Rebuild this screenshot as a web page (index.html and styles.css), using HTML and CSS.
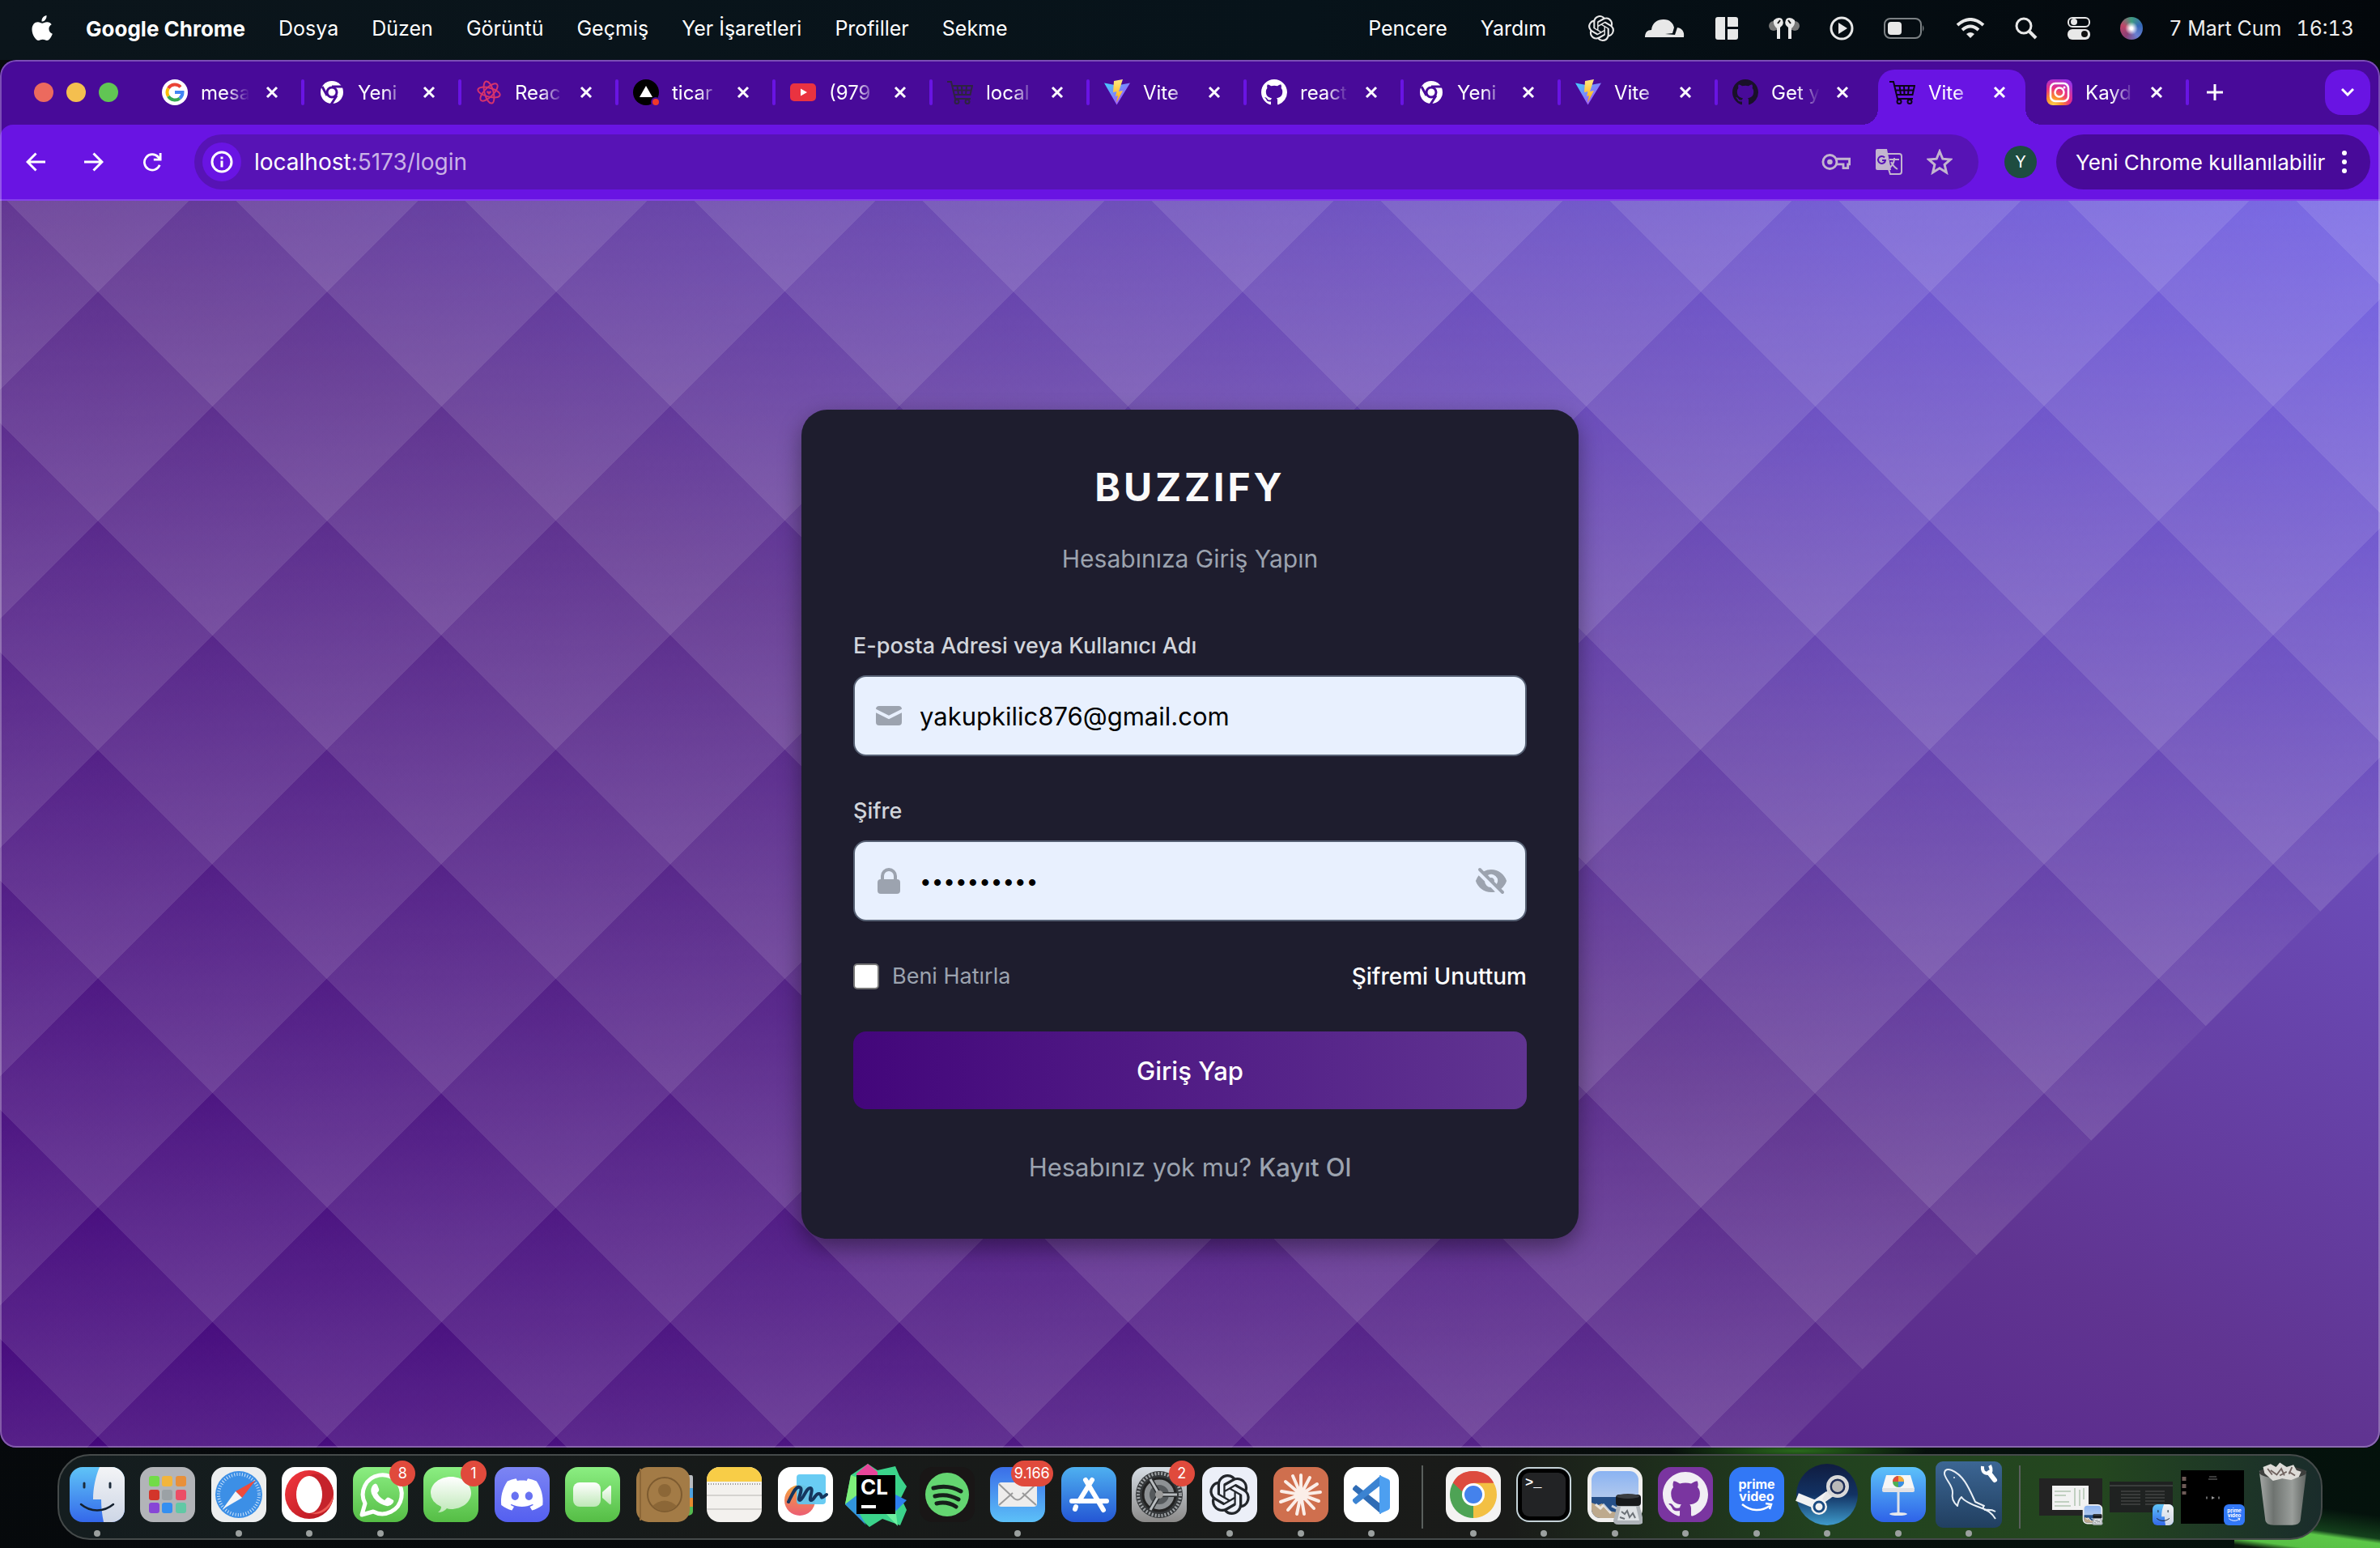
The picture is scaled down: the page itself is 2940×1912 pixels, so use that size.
FILE: index.html
```html
<!DOCTYPE html>
<html lang="tr">
<head>
<meta charset="utf-8">
<title>Buzzify</title>
<link rel="stylesheet" href="styles.css">
</head>
<body>
<svg class="defs" aria-hidden="true">
  <defs>
    <linearGradient id="viteBody" x1="0" y1="0" x2="1" y2="1"><stop offset="0" stop-color="#41d1ff"/><stop offset="1" stop-color="#bd34fe"/></linearGradient>
    <linearGradient id="viteBolt" x1="0" y1="0" x2="0" y2="1"><stop offset="0" stop-color="#ffea83"/><stop offset="1" stop-color="#ffa800"/></linearGradient>
    <linearGradient id="gloss" x1="0" y1="0" x2="0" y2="1"><stop offset="0" stop-color="#fff"/><stop offset="1" stop-color="#bfe8b8"/></linearGradient>
    <symbol id="close" viewBox="0 0 16 16"><path d="M2 2l12 12M14 2L2 14" stroke="#fff" stroke-width="3" fill="none"/></symbol>
    <symbol id="github" viewBox="0 0 16 16"><path d="M8 0C3.58 0 0 3.58 0 8c0 3.54 2.29 6.53 5.47 7.59.4.07.55-.17.55-.38 0-.19-.01-.82-.01-1.49-2.01.37-2.53-.49-2.69-.94-.09-.23-.48-.94-.82-1.13-.28-.15-.68-.52-.01-.53.63-.01 1.08.58 1.23.82.72 1.21 1.87.87 2.33.66.07-.52.28-.87.51-1.07-1.78-.2-3.64-.89-3.64-3.95 0-.87.31-1.59.82-2.15-.08-.2-.36-1.02.08-2.12 0 0 .67-.21 2.2.82.64-.18 1.32-.27 2-.27s1.36.09 2 .27c1.53-1.04 2.2-.82 2.2-.82.44 1.1.16 1.92.08 2.12.51.56.82 1.27.82 2.15 0 3.07-1.87 3.75-3.65 3.95.29.25.54.73.54 1.48 0 1.07-.01 1.93-.01 2.2 0 .21.15.46.55.38A8.01 8.01 0 0016 8c0-4.42-3.58-8-8-8z"/></symbol>
    <symbol id="openai" viewBox="0 0 24 24"><path d="M22.2819 9.8211a5.9847 5.9847 0 0 0-.5157-4.9108 6.0462 6.0462 0 0 0-6.5098-2.9A6.0651 6.0651 0 0 0 4.9807 4.1818a5.9847 5.9847 0 0 0-3.9977 2.9 6.0462 6.0462 0 0 0 .7427 7.0966 5.98 5.98 0 0 0 .511 4.9107 6.051 6.051 0 0 0 6.5146 2.9001A5.9847 5.9847 0 0 0 13.2599 24a6.0557 6.0557 0 0 0 5.7718-4.2058 5.9894 5.9894 0 0 0 3.9977-2.9001 6.0557 6.0557 0 0 0-.7475-7.0729zm-9.022 12.6081a4.4755 4.4755 0 0 1-2.8764-1.0408l.1419-.0804 4.7783-2.7582a.7948.7948 0 0 0 .3927-.6813v-6.7369l2.02 1.1686a.071.071 0 0 1 .038.052v5.5826a4.504 4.504 0 0 1-4.4945 4.4944zm-9.6607-4.1254a4.4708 4.4708 0 0 1-.5346-3.0137l.142.0852 4.783 2.7582a.7712.7712 0 0 0 .7806 0l5.8428-3.3685v2.3324a.0804.0804 0 0 1-.0332.0615L9.74 19.9502a4.4992 4.4992 0 0 1-6.1408-1.6464zM2.3408 7.8956a4.485 4.485 0 0 1 2.3655-1.9728V11.6a.7664.7664 0 0 0 .3879.6765l5.8144 3.3543-2.0201 1.1685a.0757.0757 0 0 1-.071 0l-4.8303-2.7865A4.504 4.504 0 0 1 2.3408 7.872zm16.5963 3.8558L13.1038 8.364 15.1192 7.2a.0757.0757 0 0 1 .071 0l4.8303 2.7913a4.4944 4.4944 0 0 1-.6765 8.1042v-5.6772a.79.79 0 0 0-.407-.667zm2.0107-3.0231l-.142-.0852-4.7735-2.7818a.7759.7759 0 0 0-.7854 0L9.409 9.2297V6.8974a.0662.0662 0 0 1 .0284-.0615l4.8303-2.7866a4.4992 4.4992 0 0 1 6.6802 4.66zM8.3065 12.863l-2.02-1.1638a.0804.0804 0 0 1-.038-.0567V6.0742a4.4992 4.4992 0 0 1 7.3757-3.4537l-.142.0805L8.704 5.459a.7948.7948 0 0 0-.3927.6813zm1.0976-2.3654l2.602-1.4998 2.6069 1.4998v2.9994l-2.5974 1.4997-2.6067-1.4997Z"/></symbol>
    <symbol id="chromium" viewBox="0 0 32 32"><circle cx="16" cy="16" r="14" fill="#fff"/><circle cx="16" cy="16" r="6" fill="#fff" stroke="#480a99" stroke-width="3"/><path d="M16 9h13M10 20L4 9M22 20l-7 11" stroke="#480a99" stroke-width="3" fill="none"/></symbol>
    <symbol id="vite" viewBox="0 0 32 32"><path d="M0 4.500l15.500 27L32 4.500 16 7.500z" fill="url(#viteBody)"/><path d="M23 0L12 2l-1 14 4.500-1-1.500 6 3-1-2 9 8-15-5 1z" fill="url(#viteBolt)"/></symbol>
    <symbol id="cart" viewBox="0 0 32 32"><path d="M0 3h5l5 21h19M6.500 8H31l-2.500 11H9M12.500 8l1.500 11M18 8l.5 11M24 8l-1 11M7 13.500h23" fill="none" stroke="currentColor" stroke-width="2"/><circle cx="12" cy="27.500" r="2.500" fill="none" stroke="currentColor" stroke-width="2"/><circle cx="25" cy="27.500" r="2.500" fill="none" stroke="currentColor" stroke-width="2"/></symbol>
    <symbol id="finder" viewBox="0 0 68 68">
      <linearGradient id="fl" x1="0" y1="0" x2="0" y2="1"><stop offset="0" stop-color="#5fc4f7"/><stop offset="1" stop-color="#3468ea"/></linearGradient>
      <linearGradient id="fr" x1="0" y1="0" x2="0" y2="1"><stop offset="0" stop-color="#f3f4f6"/><stop offset="1" stop-color="#cdd6e6"/></linearGradient>
      <rect width="68" height="68" rx="16" fill="url(#fl)"/><path d="M37 0h15a16 16 0 0116 16v36a16 16 0 01-16 16H42c-2-9-3-19-3-28H29C29 26 32 12 37 0z" fill="url(#fr)"/><path d="M18 20v5M50 20v5" stroke="#1c2b3a" stroke-width="3" stroke-linecap="round"/><path d="M14 46c12 10 28 10 40 0" fill="none" stroke="#14202e" stroke-width="2.500" stroke-linecap="round"/>
    </symbol>
    <symbol id="primevideo" viewBox="0 0 68 68"><rect width="68" height="68" rx="16" fill="#3278f6"/><text x="34" y="27" text-anchor="middle" class="prime-text">prime</text><text x="34" y="42" text-anchor="middle" class="prime-text">video</text><path d="M16 46c11 9 24 9 34 2M45 45l7 1-2 6" fill="none" stroke="#fff" stroke-width="2.500"/></symbol>
    <symbol id="preview" viewBox="0 0 68 72">
      <linearGradient id="sky" x1="0" y1="0" x2="0" y2="1"><stop offset="0" stop-color="#8ab3f2"/><stop offset="1" stop-color="#cfd9ea"/></linearGradient>
      <rect width="68" height="68" rx="16" fill="#f1f0ef"/><rect x="5" y="5" width="58" height="58" rx="11" fill="url(#sky)"/><path d="M5 37h58v15a11 11 0 01-11 11H16A11 11 0 015 52z" fill="#254f88"/><path d="M5 44l8 3 5-2 8 9 10 2 6 7H16A11 11 0 015 52z" fill="#bda98d"/><path d="M10 46l6 5 4-4 9 10M30 48l8 4" stroke="#fff" stroke-width="3" fill="none" opacity=".7"/>
      <path d="M37 46h27l5 20q0 5-6 5H38q-6 0-6-5z" fill="#aeb3b8"/><path d="M41 49h19l4 17H37z" fill="#dfe2e5"/><path d="M42 55l4 3 3-4 3 8 4-5 3 6M40 62l6 2" stroke="#6d7277" stroke-width="2" fill="none"/><rect x="35" y="34" width="31" height="14" rx="4" fill="#17191b"/><ellipse cx="50" cy="36" rx="14" ry="3" fill="#3a3d40"/>
    </symbol>
  </defs>
</svg>

<header class="menubar">
  <nav class="menus">
    <button aria-label="Apple"><svg width="26" height="32" viewBox="0 0 26 32" fill="#fff"><path d="M18.500 0c.3 2.800-.8 4.600-2 5.900-1.200 1.200-2.700 1.800-4 1.700-.2-2.400.8-4.200 2-5.500C15.600 1 17.200.2 18.500 0zM24.700 11.200c-2.200 1.300-3.400 3.200-3.300 5.500.1 2.800 1.700 4.900 4.400 6-1 3-3.700 8.200-6.900 8.300-1.900 0-2.700-1.200-5.100-1.200-2.500 0-3.300 1.200-5.200 1.200C5 31 .500 23.500.500 17.500.500 11.500 4 8.300 7.700 8.300c2.300 0 4 1.500 5.500 1.500 1.400 0 3.400-1.700 6.100-1.600 2.300.1 4.200 1.100 5.400 3z"/></svg></button>
    <button class="bold">Google Chrome</button><button>Dosya</button><button>Düzen</button><button>Görüntü</button><button>Geçmiş</button><button>Yer İşaretleri</button><button>Profiller</button><button>Sekme</button>
  </nav>
  <nav class="menus menus-right"><button>Pencere</button><button>Yardım</button></nav>
  <div class="status">
    <svg width="32" height="32" fill="#e8e8e8"><use href="#openai"/></svg>
    <svg width="50" height="24" viewBox="0 0 50 24" fill="#e8e8e8"><path d="M1 23C1 17 4 14 9 14 10 5 16 1 24 1c8 0 12 5 13 10l-2 7-9 1 12 1 3-9c6 1 9 5 8 12z"/></svg>
    <svg width="30" height="30" viewBox="0 0 30 30" fill="#e8e8e8"><path d="M4 1h9v28H4q-3 0-3-3V4q0-3 3-3zM16 1h10q3 0 3 3v9H16zM16 16h13v10q0 3-3 3H16z"/></svg>
    <svg width="38" height="28" viewBox="0 0 38 28" fill="#e8e8e8"><circle cx="6" cy="11" r="6" fill="#777"/><circle cx="32" cy="11" r="6" fill="#777"/><path d="M6 4q5-5 10-2 3 4 1 8l-3 3v14h-4V14Q5 10 6 4zM32 4q-5-5-10-2-3 4-1 8l3 3v14h4V14q5-4 4-10z"/><path d="M14 4l-3 4M24 4l3 4" stroke="#111" stroke-width="2"/></svg>
    <svg width="30" height="30" viewBox="0 0 30 30"><circle cx="15" cy="15" r="13" fill="none" stroke="#e8e8e8" stroke-width="3"/><path d="M11 8l11 7-11 7z" fill="#e8e8e8"/></svg>
    <svg width="52" height="26" viewBox="0 0 52 26"><rect x="1" y="1" width="45" height="24" rx="7" fill="none" stroke="#7c8184" stroke-width="2"/><rect x="5" y="5" width="17" height="16" rx="4" fill="#e8e8e8"/><path d="M48 9q3 4 0 8z" fill="#7c8184"/></svg>
    <svg width="36" height="26" viewBox="0 0 36 26" fill="none" stroke="#e8e8e8" stroke-width="4"><path d="M2 9q16-14 32 0M8 15q10-9 20 0"/><path d="M13 20q5-4 10 0l-5 5z" fill="#e8e8e8" stroke="none"/></svg>
    <svg width="28" height="28" viewBox="0 0 28 28" fill="none" stroke="#e8e8e8" stroke-width="3"><circle cx="11" cy="11" r="9"/><path d="M18 18l8 8" stroke-width="4"/></svg>
    <svg width="28" height="28" viewBox="0 0 28 28"><rect x="1" y="1" width="26" height="11" rx="5" fill="none" stroke="#e8e8e8" stroke-width="2"/><circle cx="8" cy="6" r="4" fill="#e8e8e8"/><rect y="15" width="28" height="13" rx="6" fill="#e8e8e8"/><circle cx="21" cy="21" r="4" fill="#111"/></svg>
    <span class="siri"></span>
  </div>
  <div class="clock"><span>7 Mart Cum</span><span>16:13</span></div>
</header>

<section class="window">
  <div class="tabstrip">
    <div class="lights"><i class="red"></i><i class="yellow"></i><i class="green"></i></div>
    <div class="tabs">
      <div class="tab"><svg width="32" height="32" viewBox="0 0 32 32"><circle cx="16" cy="16" r="16" fill="#fff"/><g fill="none" stroke-width="4"><path d="M23 9.500A9.500 9.500 0 008 11" stroke="#ea4335"/><path d="M8 11a9.500 9.500 0 000 10" stroke="#fbbc05"/><path d="M8 21a9.500 9.500 0 0014 2.500" stroke="#34a853"/><path d="M16 16h9.500a9.500 9.500 0 01-3.500 7.500" stroke="#4285f4"/></g></svg><span class="title">mesa</span><button class="x" aria-label="Kapat"><svg width="16" height="16"><use href="#close"/></svg></button></div>
      <div class="tab"><svg width="32" height="32"><use href="#chromium"/></svg><span class="title">Yeni</span><button class="x" aria-label="Kapat"><svg width="16" height="16"><use href="#close"/></svg></button></div>
      <div class="tab"><svg width="32" height="32" viewBox="0 0 32 32" fill="none" stroke="#d6336c" stroke-width="2"><ellipse cx="16" cy="16" rx="14" ry="5.500" transform="rotate(15 16 16)"/><ellipse cx="16" cy="16" rx="14" ry="5.500" transform="rotate(75 16 16)"/><ellipse cx="16" cy="16" rx="14" ry="5.500" transform="rotate(135 16 16)"/><path d="M16 19l-3-3q0-3 3-1 3-2 3 1z" fill="#d6336c" stroke="none"/></svg><span class="title">Reac</span><button class="x" aria-label="Kapat"><svg width="16" height="16"><use href="#close"/></svg></button></div>
      <div class="tab"><svg width="32" height="32" viewBox="0 0 32 32"><circle cx="16" cy="16" r="16"/><path d="M16 8l8 14H8z" fill="#fff"/><circle cx="28" cy="28" r="6" fill="#480a99"/><circle cx="28" cy="28" r="4" fill="#f0392b"/></svg><span class="title">ticar</span><button class="x" aria-label="Kapat"><svg width="16" height="16"><use href="#close"/></svg></button></div>
      <div class="tab"><svg width="32" height="32" viewBox="0 0 32 32"><rect y="5" width="32" height="22" rx="5" fill="#ea3340"/><path d="M13 11.500l8 4.500-8 4.500z" fill="#fff"/></svg><span class="title">(979</span><button class="x" aria-label="Kapat"><svg width="16" height="16"><use href="#close"/></svg></button></div>
      <div class="tab"><svg class="dim" width="32" height="32"><use href="#cart"/></svg><span class="title">local</span><button class="x" aria-label="Kapat"><svg width="16" height="16"><use href="#close"/></svg></button></div>
      <div class="tab"><svg width="32" height="32"><use href="#vite"/></svg><span class="title">Vite</span><button class="x" aria-label="Kapat"><svg width="16" height="16"><use href="#close"/></svg></button></div>
      <div class="tab"><svg width="32" height="32" fill="#fff"><use href="#github"/></svg><span class="title">react</span><button class="x" aria-label="Kapat"><svg width="16" height="16"><use href="#close"/></svg></button></div>
      <div class="tab"><svg width="32" height="32"><use href="#chromium"/></svg><span class="title">Yeni</span><button class="x" aria-label="Kapat"><svg width="16" height="16"><use href="#close"/></svg></button></div>
      <div class="tab"><svg width="32" height="32"><use href="#vite"/></svg><span class="title">Vite</span><button class="x" aria-label="Kapat"><svg width="16" height="16"><use href="#close"/></svg></button></div>
      <div class="tab nosep"><svg width="32" height="32" fill="#191128"><use href="#github"/></svg><span class="title">Get y</span><button class="x" aria-label="Kapat"><svg width="16" height="16"><use href="#close"/></svg></button></div>
      <div class="tab active nosep"><svg class="dark" width="32" height="32"><use href="#cart"/></svg><span class="title">Vite</span><button class="x" aria-label="Kapat"><svg width="16" height="16"><use href="#close"/></svg></button></div>
      <div class="tab"><svg width="32" height="32" viewBox="0 0 32 32"><radialGradient id="ig" cx=".25" cy="1" r="1.100"><stop offset="0" stop-color="#ffd34e"/><stop offset=".3" stop-color="#fb8a2e"/><stop offset=".6" stop-color="#ea2f80"/><stop offset="1" stop-color="#9a33e8"/></radialGradient><rect width="32" height="32" rx="8" fill="url(#ig)"/><rect x="5" y="5" width="22" height="22" rx="6" fill="none" stroke="#fff" stroke-width="2.500"/><circle cx="16" cy="16" r="5.500" fill="none" stroke="#fff" stroke-width="2.500"/><circle cx="22" cy="10" r="1.500" fill="#fff"/></svg><span class="title">Kayd</span><button class="x" aria-label="Kapat"><svg width="16" height="16"><use href="#close"/></svg></button></div>
    </div>
    <button class="newtab" aria-label="Yeni sekme"><svg width="20" height="20" viewBox="0 0 20 20"><path d="M10 0v20M0 10h20" stroke="#fff" stroke-width="3"/></svg></button>
    <button class="tabsearch" aria-label="Sekmelerde ara"><svg width="16" height="10" viewBox="0 0 16 10"><path d="M1 1l7 7 7-7" fill="none" stroke="#fff" stroke-width="3"/></svg></button>
  </div>

  <div class="toolbar">
    <div class="nav">
      <button aria-label="Geri"><svg width="24" height="24" viewBox="0 0 24 24" fill="none" stroke="#fff" stroke-width="3"><path d="M24 12H2M12.500 1.500L2 12l10.500 10.500"/></svg></button>
      <button aria-label="İleri"><svg width="24" height="24" viewBox="0 0 24 24" fill="none" stroke="#fff" stroke-width="3"><path d="M0 12h22M11.500 1.500L22 12 11.500 22.500"/></svg></button>
      <button aria-label="Yenile"><svg width="24" height="24" viewBox="0 0 26 26" fill="none" stroke="#fff" stroke-width="3"><path d="M23 17A10.500 10.500 0 1121 6.500L23.500 9M24 1v9h-9"/></svg></button>
    </div>
    <div class="omnibox">
      <button class="info" aria-label="Site bilgileri"><svg width="28" height="28" viewBox="0 0 28 28"><circle cx="14" cy="14" r="12" fill="none" stroke="#fff" stroke-width="3"/><path d="M14 12.500v8M14 7.500v3" stroke="#fff" stroke-width="3"/></svg></button>
      <span class="url">localhost<span>:5173/login</span></span>
      <div class="omni-icons">
        <svg width="36" height="22" viewBox="0 0 38 22" fill="none" stroke="#c3b5cf" stroke-width="3"><circle cx="11" cy="11" r="9"/><path d="M19.500 7H36.500v7h-2v5h-6v-5h-9"/><circle cx="11" cy="11" r="3.500" fill="#c3b5cf" stroke="none"/></svg>
        <svg width="34" height="34" viewBox="0 0 34 34"><path d="M3 1h12l5 26H3q-2 0-2-2V3q0-2 2-2z" fill="#c3b5cf"/><path d="M15 7h15q3 0 3 3v19q0 3-3 3H19l-2-6" fill="none" stroke="#c3b5cf" stroke-width="2"/><path d="M12 11.500A4.500 4.500 0 1013 15H9" fill="none" stroke="#5713b5" stroke-width="2"/><path d="M18 14h12M24 12v2q-1 7-7 11M20 17q3 6 8 9" fill="none" stroke="#c3b5cf" stroke-width="2"/></svg>
        <svg width="32" height="32" viewBox="0 0 32 32"><path d="M16 3l3.800 9.200 9.700.8-7.400 6.400 2.300 9.600-8.400-5.200L7.600 29l2.300-9.600L2.500 13l9.700-.8z" fill="none" stroke="#c3b5cf" stroke-width="3"/></svg>
      </div>
    </div>
    <button class="avatar">Y</button>
    <button class="update"><span>Yeni Chrome kullanılabilir</span><svg width="6" height="28" viewBox="0 0 6 28" fill="#fff"><circle cx="3" cy="3" r="3"/><circle cx="3" cy="14" r="3"/><circle cx="3" cy="25" r="3"/></svg></button>
  </div>

  <main class="page">
    <form class="card">
      <h1>BUZZIFY</h1>
      <p class="subtitle">Hesabınıza Giriş Yapın</p>
      <label class="label" for="email">E-posta Adresi veya Kullanıcı Adı</label>
      <div class="field">
        <svg class="lead" width="40" height="40" viewBox="0 0 20 20" fill="#9ca3af"><path d="M2.003 5.884L10 9.882l7.997-3.998A2 2 0 0016 4H4a2 2 0 00-1.997 1.884z"/><path d="M18 8.118l-8 4-8-4V14a2 2 0 002 2h12a2 2 0 002-2V8.118z"/></svg>
        <input id="email" type="text" value="yakupkilic876@gmail.com">
      </div>
      <label class="label" for="password">Şifre</label>
      <div class="field">
        <svg class="lead" width="40" height="40" viewBox="0 0 20 20" fill="#9ca3af"><path fill-rule="evenodd" d="M5 9V7a5 5 0 0110 0v2a2 2 0 012 2v5a2 2 0 01-2 2H5a2 2 0 01-2-2v-5a2 2 0 012-2zm8-2v2H7V7a3 3 0 016 0z"/></svg>
        <input id="password" type="password" value="password12">
        <button type="button" class="toggle" aria-label="Şifreyi göster"><svg width="40" height="40" viewBox="0 0 20 20" fill="#9ca3af"><path fill-rule="evenodd" d="M3.707 2.293a1 1 0 00-1.414 1.414l14 14a1 1 0 001.414-1.414l-1.473-1.473A10.014 10.014 0 0019.542 10C18.268 5.943 14.478 3 10 3a9.958 9.958 0 00-4.512 1.074l-1.780-1.781zm4.261 4.260l1.514 1.515a2.003 2.003 0 012.450 2.450l1.514 1.514a4 4 0 00-5.478-5.478z"/><path d="M12.454 16.697L9.750 13.992a4 4 0 01-3.742-3.741L2.335 6.578A9.980 9.980 0 00.458 10c1.274 4.057 5.065 7 9.542 7 .847 0 1.669-.105 2.454-.303z"/></svg></button>
      </div>
      <div class="options">
        <label class="remember" for="remember"><input id="remember" type="checkbox">Beni Hatırla</label>
        <a href="#sifre">Şifremi Unuttum</a>
      </div>
      <button class="submit" type="submit">Giriş Yap</button>
      <p class="signup">Hesabınız yok mu? <a href="#kayit">Kayıt Ol</a></p>
    </form>
  </main>
</section>

<footer class="dock">
  <div class="slot run"><svg class="icon"><use href="#finder"/></svg></div>
  <div class="slot"><svg class="icon" viewBox="0 0 68 68"><rect width="68" height="68" rx="16" fill="#b2b4b8"/><g><rect x="11" y="11" width="13" height="13" rx="3" fill="#72dc48"/><rect x="27" y="11" width="13" height="13" rx="3" fill="#f2b53c"/><rect x="44" y="11" width="13" height="13" rx="3" fill="#e8903a"/><rect x="11" y="28" width="13" height="13" rx="3" fill="#d3352a"/><rect x="27" y="28" width="13" height="13" rx="3" fill="#9ba1a5"/><rect x="44" y="28" width="13" height="13" rx="3" fill="#ec4d66"/><rect x="11" y="44" width="13" height="13" rx="3" fill="#8746d6"/><rect x="27" y="44" width="13" height="13" rx="3" fill="#358ff0"/><rect x="44" y="44" width="13" height="13" rx="3" fill="#62c8a5"/></g></svg></div>
  <div class="slot run"><svg class="icon" viewBox="0 0 68 68"><rect width="68" height="68" rx="16" fill="#eceeef"/><circle cx="34" cy="34" r="29" fill="#3c8fe6"/><circle cx="34" cy="34" r="25" fill="none" stroke="#cfe4fa" stroke-width="4" stroke-dasharray="1 2.270"/><path d="M55 16L38 38l-8-8z" fill="#ee4b3c"/><path d="M14 52l16-22 8 8z" fill="#f4f5f7"/></svg></div>
  <div class="slot run"><svg class="icon" viewBox="0 0 68 68"><linearGradient id="op" x1="0" y1="0" x2="1" y2="1"><stop offset="0" stop-color="#f5393f"/><stop offset="1" stop-color="#b0131d"/></linearGradient><rect width="68" height="68" rx="16" fill="#fff"/><ellipse cx="34" cy="34" rx="30" ry="30" fill="url(#op)"/><path d="M34 11c10-8 30 4 30 23S44 65 34 57z" fill="#c5232b"/><path d="M36 57c12 4 28-6 28-23-4 12-12 22-28 23z" fill="#ef5a55"/><ellipse cx="34" cy="34" rx="16" ry="23" fill="#fff"/></svg></div>
  <div class="slot run"><svg class="icon" viewBox="0 0 68 68"><linearGradient id="gr" x1="0" y1="0" x2="0" y2="1"><stop offset="0" stop-color="#8bee82"/><stop offset="1" stop-color="#55bd45"/></linearGradient><rect width="68" height="68" rx="16" fill="url(#gr)"/><path d="M11 59l4-14A24 24 0 1125 55z" fill="none" stroke="#fff" stroke-width="5" stroke-linejoin="round"/><path d="M25 22q3-3 5 0l2 5q1 2-2 5 3 6 9 9l3-3q1-1 3 0l5 3q1 1-1 4-4 5-11 2-11-4-15-14-2-7 2-11z" fill="#fff"/></svg><span class="badge">8</span></div>
  <div class="slot"><svg class="icon" viewBox="0 0 68 68"><rect width="68" height="68" rx="16" fill="url(#gr)"/><path d="M34 12c14 0 25 9 25 20S48 52 34 52q-3 0-5-1-4 5-11 5 4-3 4-7Q9 43 9 32c0-11 11-20 25-20z" fill="url(#gloss)"/></svg><span class="badge">1</span></div>
  <div class="slot"><svg class="icon" viewBox="0 0 68 68"><linearGradient id="dc" x1="0" y1="0" x2="0" y2="1"><stop offset="0" stop-color="#7c85f3"/><stop offset="1" stop-color="#545ff0"/></linearGradient><rect width="68" height="68" rx="16" fill="url(#dc)"/><g transform="translate(8 8) scale(2.150)"><path fill="#fff" d="M20.317 4.370a19.791 19.791 0 00-4.885-1.515.074.074 0 00-.079.037c-.211.375-.445.865-.608 1.250-1.845-.276-3.680-.276-5.487 0-.164-.393-.406-.874-.618-1.250a.077.077 0 00-.079-.037 19.736 19.736 0 00-4.885 1.515.070.070 0 00-.032.028C.533 9.046-.319 13.580.099 18.058a.082.082 0 00.031.056c2.053 1.508 4.041 2.423 5.993 3.029a.078.078 0 00.084-.028c.462-.630.873-1.295 1.226-1.994a.076.076 0 00-.042-.106c-.653-.248-1.274-.550-1.872-.892a.077.077 0 01-.008-.128c.126-.094.252-.192.372-.291a.074.074 0 01.078-.011c3.928 1.793 8.180 1.793 12.061 0a.074.074 0 01.079.010c.120.099.246.198.373.292a.077.077 0 01-.007.128 12.299 12.299 0 01-1.873.891.077.077 0 00-.041.107c.360.698.772 1.363 1.225 1.993a.076.076 0 00.084.029c1.961-.607 3.950-1.522 6.002-3.029a.077.077 0 00.031-.055c.500-5.177-.838-9.674-3.549-13.660a.061.061 0 00-.031-.029zM8.020 15.331c-1.183 0-2.157-1.086-2.157-2.419 0-1.333.956-2.419 2.157-2.419 1.211 0 2.176 1.095 2.157 2.419 0 1.333-.956 2.419-2.157 2.419zm7.975 0c-1.183 0-2.157-1.086-2.157-2.419 0-1.333.955-2.419 2.157-2.419 1.211 0 2.176 1.095 2.157 2.419 0 1.333-.946 2.419-2.157 2.419z"/></g></svg></div>
  <div class="slot"><svg class="icon" viewBox="0 0 68 68"><rect width="68" height="68" rx="16" fill="url(#gr)"/><rect x="10" y="19" width="34" height="30" rx="8" fill="url(#gloss)"/><path d="M46 31l9-8q2-1 2 2v19q0 3-2 2l-9-8z" fill="url(#gloss)"/></svg></div>
  <div class="slot"><svg class="icon" viewBox="0 0 68 68"><path d="M62 10h6q2 0 2 3v13h-8z" fill="#b9bcc0"/><path d="M62 26h8v12h-8z" fill="#4ea3e0"/><path d="M62 38h8v11h-8z" fill="#e88a2f"/><path d="M62 49h8v6q0 5-8 5z" fill="#55b94f"/><rect width="66" height="68" rx="15" fill="#a37b46"/><path d="M5 2v64" stroke="#8c6737" stroke-width="2"/><circle cx="35" cy="34" r="21" fill="none" stroke="#7d5b30" stroke-width="2"/><circle cx="35" cy="29" r="8" fill="#8c6737"/><path d="M20 48q15-13 30 0-15 13-30 0z" fill="#8c6737"/></svg></div>
  <div class="slot"><svg class="icon" viewBox="0 0 68 68"><rect width="68" height="68" rx="16" fill="#f3f1ee"/><path d="M0 18v-2A16 16 0 0116 0h36a16 16 0 0116 16v2z" fill="#f8cd47"/><path d="M2 21h64" stroke="#999" stroke-width="2" stroke-dasharray="1 2"/><path d="M0 35h68M0 52h68" stroke="#d5d3d0" stroke-width="2"/></svg></div>
  <div class="slot"><svg class="icon" viewBox="0 0 68 68"><linearGradient id="ff" x1="0" y1="0" x2="0" y2="1"><stop offset="0" stop-color="#f2a33c"/><stop offset="1" stop-color="#ec5e74"/></linearGradient><rect width="68" height="68" rx="16" fill="#fff"/><circle cx="27" cy="41" r="19" fill="url(#ff)"/><rect x="23" y="9" width="36" height="37" rx="4" fill="#5cc8f2" opacity=".92"/><path d="M13 43c5-10 9-20 14-18s-4 16 0 16 8-16 13-15-3 15 1 15 5-9 10-8-1 9 9 1" fill="none" stroke="#15365e" stroke-width="4" stroke-linecap="round"/></svg></div>
  <div class="slot"><svg class="icon" viewBox="0 0 68 68"><path d="M3 10L24-4l12 8 22-5 5 12 9 13-7 14 7 15-8 19-22-8-16 10L2 52l-6-6z" fill="#3bd38b"/><path d="M10 8l14-12 12 10v12H10z" fill="#e7459a"/><path d="M3 10l11 4v20L-4 46z" fill="#7ef07a"/><path d="M-4 46l18-14v26l8 14z" fill="#3195dc"/><path d="M58 34l14 7-14 14z" fill="#2d7ff0"/><path d="M44 55l14-4 3 22z" fill="#6cf0a0"/><rect x="10" y="10" width="48" height="48"/><text x="15" y="34" class="cl-text">CL</text><path d="M16 49h18" stroke="#fff" stroke-width="4"/></svg></div>
  <div class="slot"><svg class="icon" viewBox="0 0 68 68"><rect width="68" height="68" rx="16" fill="#191616"/><circle cx="34" cy="34" r="27" fill="#64d571"/><path d="M17 26q18-5 34 4M19 36q15-4 29 4M21 45q13-3 24 4" fill="none" stroke="#16201a" stroke-width="5" stroke-linecap="round"/></svg></div>
  <div class="slot run"><svg class="icon" viewBox="0 0 68 68"><linearGradient id="ml" x1="0" y1="0" x2="0" y2="1"><stop offset="0" stop-color="#3a6ee8"/><stop offset="1" stop-color="#5cc0f8"/></linearGradient><rect width="68" height="68" rx="16" fill="url(#ml)"/><rect x="10" y="19" width="48" height="30" rx="4" fill="#eeedec"/><path d="M11 47l17-15M57 47L40 32M11 21l19 18q4 3 8 0l19-18" fill="none" stroke="#9a9a9a" stroke-width="2"/></svg><span class="badge">9.166</span></div>
  <div class="slot"><svg class="icon" viewBox="0 0 68 68"><linearGradient id="as" x1="0" y1="0" x2="0" y2="1"><stop offset="0" stop-color="#4eb0f0"/><stop offset="1" stop-color="#2456d4"/></linearGradient><rect width="68" height="68" rx="16" fill="url(#as)"/><path d="M30 16l22 37M38 16L22 42M18 49l-1 3M13 42h43" stroke="#fff" stroke-width="6" stroke-linecap="round"/></svg></div>
  <div class="slot"><svg class="icon" viewBox="0 0 68 68"><linearGradient id="st" x1="0" y1="0" x2="0" y2="1"><stop offset="0" stop-color="#d6dde4"/><stop offset="1" stop-color="#8b8a89"/></linearGradient><rect width="68" height="68" rx="16" fill="url(#st)"/><circle cx="34" cy="34" r="29" fill="#35383a"/><circle cx="34" cy="34" r="26" fill="none" stroke="#9fa3a6" stroke-width="4" stroke-dasharray="2 2"/><circle cx="34" cy="34" r="20" fill="#8d9194" stroke="#222" stroke-width="3"/><circle cx="34" cy="34" r="12" fill="#55595c"/><path d="M34 34h22M34 34L23 15M34 34L23 53" stroke="#2a2d2f" stroke-width="6"/><path d="M34 34h22M34 34L23 15M34 34L23 53" stroke="#b8bcbf" stroke-width="3"/><circle cx="34" cy="34" r="5" fill="#999"/></svg><span class="badge">2</span></div>
  <div class="slot run"><svg class="icon" viewBox="0 0 68 68"><rect width="68" height="68" rx="16" fill="#eceff8"/><svg x="9" y="9" width="50" height="50" fill="#23262b"><use href="#openai"/></svg></svg></div>
  <div class="slot run"><svg class="icon" viewBox="0 0 68 68"><rect width="68" height="68" rx="16" fill="#cf6f4e"/><path d="M34 34V10M34 34l11-21M34 34l20-13M34 34l24-3M34 34l22 8M34 34l16 17M34 34l4 24M34 34l-5 24M34 34L18 53M34 34L9 43M34 34l-24-4M34 34L15 18M34 34L24 11" stroke="#fbeee8" stroke-width="4" stroke-linecap="round"/></svg></div>
  <div class="slot run"><svg class="icon" viewBox="0 0 68 68"><rect width="68" height="68" rx="16" fill="#fff"/><path d="M46 58L11 28q-1-2 4-6l31 24z" fill="#2f6cb5"/><path d="M46 10L11 40q-1 3 4 6l31-24z" fill="#3b83d2"/><path d="M44 10l11 5q2 1 2 3v32q0 2-2 3l-11 5z" fill="#4d9ff0"/></svg></div>
  <div class="divider"></div>
  <div class="slot run"><svg class="icon" viewBox="0 0 68 68"><rect width="68" height="68" rx="16" fill="#f4f3f2"/><path d="M34 34L8.900 19.500A29 29 0 0159.100 19.500z" fill="#dd4b3e"/><path d="M34 34h0L59.100 19.500A29 29 0 0134 63z" fill="#f3c043"/><path d="M34 34L34 63A29 29 0 018.900 19.500z" fill="#4ea355"/><path d="M34 19.500h25.100l-12 20z" fill="#f3c043"/><path d="M9 19.500l13 22 11 0-4-22z" fill="#4ea355"/><path d="M8.900 19.500Q16 5 34 5t25.100 14.500H34L20 30z" fill="#dd4b3e"/><circle cx="34" cy="34" r="14" fill="#fff"/><circle cx="34" cy="34" r="11" fill="#4482ec"/></svg></div>
  <div class="slot run"><svg class="icon" viewBox="0 0 68 68"><rect width="68" height="68" rx="16" fill="#c5d3d8"/><rect x="2" y="2" width="64" height="64" rx="14" fill="#000"/><rect x="7" y="7" width="54" height="54" rx="9" fill="#222325"/><text x="11" y="24" class="term-text">&gt;_</text></svg></div>
  <div class="slot run"><svg class="icon preview"><use href="#preview"/></svg></div>
  <div class="slot run"><svg class="icon" viewBox="0 0 68 68"><rect width="68" height="68" rx="16" fill="#7a35a0"/><svg x="6" y="6" width="56" height="56" fill="#f1eef4"><use href="#github"/></svg></svg></div>
  <div class="slot run"><svg class="icon"><use href="#primevideo"/></svg></div>
  <div class="slot run"><svg class="icon" viewBox="0 0 68 68"><linearGradient id="sm" x1="0" y1="0" x2="0" y2="1"><stop offset="0" stop-color="#101c40"/><stop offset=".5" stop-color="#123263"/><stop offset="1" stop-color="#3f9bcb"/></linearGradient><circle cx="34" cy="34" r="38" fill="url(#sm)"/><path d="M-3 37l22 9 17-12" fill="none" stroke="#f2f2f2" stroke-width="10"/><path d="M24 46l22-12-6-14z" fill="#e6e6e6"/><circle cx="47" cy="24" r="14" fill="#d9d9d9"/><circle cx="47" cy="24" r="8" fill="#1c2c56" stroke="#1c2c56" stroke-width="3"/><circle cx="47" cy="24" r="7" fill="#b9b9b9"/><circle cx="24" cy="49" r="10" fill="#f2f2f2"/><circle cx="24" cy="49" r="6" fill="none" stroke="#1a4a80" stroke-width="3"/></svg></div>
  <div class="slot run"><svg class="icon" viewBox="0 0 68 68"><linearGradient id="kn" x1="0" y1="0" x2="0" y2="1"><stop offset="0" stop-color="#5cc2fa"/><stop offset="1" stop-color="#2e62e8"/></linearGradient><rect width="68" height="68" rx="16" fill="url(#kn)"/><path d="M34 30v27" stroke="#dfe3e8" stroke-width="3"/><path d="M19 10h30l5 17H14z" fill="#f6f6f6"/><rect x="14" y="26" width="40" height="5" rx="2" fill="#e2e2e4"/><ellipse cx="34" cy="58" rx="11" ry="2" fill="#e6e8ec"/><circle cx="34" cy="18" r="7" fill="#4fae55"/><path d="M34 18v-7a7 7 0 00-7 7z" fill="#e14b3b"/><path d="M34 18h7a7 7 0 00-7-7z" fill="#f2a93c"/><path d="M34 18v7a7 7 0 007-7z" fill="#3a8ee6"/></svg></div>
  <div class="slot run"><svg class="icon" viewBox="0 0 68 68"><linearGradient id="my" x1="0" y1="0" x2="0" y2="1"><stop offset="0" stop-color="#3c6694"/><stop offset="1" stop-color="#213f60"/></linearGradient><rect x="-7" y="-7" width="82" height="82" rx="9" fill="url(#my)"/><path d="M67 64C62 56 57 53 48 50 37 46 28 42 25 37q-4 4-5 11-8-7-6-16C15 22 3 14 4 7q1-6 9-3c15 6 22 24 29 39q4 2 11 5-3 2 1 5 8-1 13 2" fill="none" stroke="#e9eff5" stroke-width="2" stroke-linejoin="round"/><circle cx="16" cy="13" r="1" fill="#e9eff5"/><path d="M59 7l7 9" fill="none" stroke="#fff" stroke-width="6" stroke-linecap="round"/><path d="M51-1q-1 9 7 9 6-2 2-10" fill="none" stroke="#fff" stroke-width="4"/></svg></div>
  <div class="divider"></div>
  <div class="slot"><svg class="thumb" viewBox="0 0 78 46"><rect width="78" height="46" fill="#232323"/><rect x="16" y="9" width="45" height="30" fill="#f2f2f2"/><path d="M19 16h20M19 21h14M19 29h18M19 34h20M44 12v22M50 14v20M55 12v14" stroke="#8fae8f"/></svg><svg class="mini"><use href="#preview"/></svg></div>
  <div class="slot"><svg class="thumb" viewBox="0 0 78 38"><rect width="78" height="38" fill="#1f2221"/><path d="M0 5h78" stroke="#3a3d3c" stroke-width="2"/><path d="M14 12h58M14 16h58M14 20h58M14 24h58M14 28h58" stroke="#555" stroke-dasharray="24 6"/></svg><svg class="mini"><use href="#finder"/></svg></div>
  <div class="slot"><svg class="thumb" viewBox="0 0 78 66"><rect width="78" height="66" fill="#000"/><path d="M4 8v22" stroke="#6d5a56" stroke-width="5" stroke-dasharray="5 4"/><path d="M35 8h9M34 11h11" stroke="#777"/><path d="M31 34h2M46 34h2" stroke="#666" stroke-width="3"/><path d="M38 32l4 2-4 2z" fill="#999"/></svg><svg class="mini"><use href="#primevideo"/></svg></div>
  <div class="slot"><svg class="icon trash" viewBox="0 0 68 68"><linearGradient id="tr"><stop offset="0" stop-color="#a5a8a6"/><stop offset=".3" stop-color="#6e7370"/><stop offset=".7" stop-color="#9a9e9b"/><stop offset="1" stop-color="#5f6461"/></linearGradient><path d="M3 3h62l-8 65q-1 6-11 6H22q-10 0-11-6z" fill="url(#tr)"/><ellipse cx="34" cy="5" rx="31" ry="8" fill="#3d3f3d"/><path d="M10 6L8-2l10-4 7 4 5-6 9 6 9-3 4 7 6 2-3 7-10 4-12-2-12 3z" fill="#dddcd8"/><path d="M18 2l8 6 6-8 4 9M42 4l8 5M30 9l9-5M14 0l6 8M46-2l-4 9" stroke="#6f625e" stroke-width="2" fill="none"/></svg></div>
</footer>
</body>
</html>
```
FILE: styles.css
```css
* { box-sizing: border-box; }
body {
  margin: 0;
  min-height: 100vh;
  display: flex;
  flex-direction: column;
  font-family: Inter, "Liberation Sans", sans-serif;
  background:
    radial-gradient(ellipse 160px 14px at 2220px 1792px, #2a6a1c, transparent),
    linear-gradient(188deg, transparent 50px, #14401c 78px, #5cc748 84px, #58c045 102px, #0b1a0c 110px) right bottom / 180px 90px no-repeat,
    linear-gradient(100deg, #06090c, #070a0b 60%, #04120c);
}
h1, p { margin: 0; }
button { border: 0; padding: 0; background: none; font: inherit; color: inherit; }
a { color: inherit; text-decoration: none; }
svg { display: block; flex: none; }
.defs { position: absolute; width: 0; height: 0; }

/* Menu bar */
.menubar {
  height: 74px;
  padding: 0 32px 4px 39px;
  display: flex;
  align-items: center;
  font-size: 25px;
  color: #fff;
  background: linear-gradient(90deg, #0b151b, #07131a 55%, #03070b);
}
.menus { display: flex; align-items: center; gap: 41px; white-space: nowrap; }
.menus .bold { font-size: 26px; font-weight: 700; }
.menus-right { margin-left: auto; }
.status { display: flex; align-items: center; gap: 37px; margin-left: 52px; }
.siri {
  width: 28px; height: 28px; border-radius: 50%;
  background: radial-gradient(circle, #fff 0 8%, transparent 40%), conic-gradient(#3f9d80, #3468b8, #6a7fd0, #8c3f75, #c04668, #3f9d80);
}
.clock { display: flex; gap: 18px; margin-left: 32px; white-space: nowrap; font-variant-numeric: tabular-nums; color: #eee; }

/* Browser window */
.window {
  position: relative;
  flex: 1;
  display: flex;
  flex-direction: column;
  border-radius: 20px;
  overflow: hidden;
  background: #480a99;
  color: #fff;
}
.window::after {
  content: "";
  position: absolute;
  inset: 0;
  border: 2px solid rgba(255, 255, 255, .28);
  border-radius: 20px;
  pointer-events: none;
}
.tabstrip { display: flex; align-items: center; height: 80px; padding: 0 12px 0 42px; }
.lights { display: flex; gap: 16px; width: 138px; }
.lights i { width: 24px; height: 24px; border-radius: 50%; }
.red { background: #ec6a5e; }
.yellow { background: #f4bf4f; }
.green { background: #61c554; }
.tabs { display: flex; align-self: stretch; }
.tab {
  position: relative;
  display: flex;
  align-items: center;
  width: 194px;
  padding-left: 20px;
  font-size: 24px;
  isolation: isolate;
}
.tab::after {
  content: "";
  position: absolute;
  right: -2px; top: 24px;
  width: 4px; height: 32px;
  border-radius: 2px;
  background: #6914e3;
}
.tab.nosep::after { display: none; }
.title {
  width: 63px;
  margin: 0 16px;
  white-space: nowrap;
  mask-image: linear-gradient(90deg, #000 32px, transparent 60px);
}
.x { width: 18px; height: 18px; display: grid; place-items: center; }
.dim { color: #2e2440; }
.dark { color: #0b0416; }
.tab.active::before {
  content: "";
  position: absolute;
  z-index: -1;
  inset: 12px 6px 0;
  border-radius: 20px 20px 0 0;
  background: #6914e3;
}
.tab.active.nosep::after {
  display: block;
  z-index: -1;
  top: auto; bottom: 0; left: -14px; right: -14px;
  width: auto; height: 20px;
  border-radius: 0;
  background:
    radial-gradient(circle at 0 0, transparent 20px, #6914e3 20px) left / 20px 20px no-repeat,
    radial-gradient(circle at 100% 0, transparent 20px, #6914e3 20px) right / 20px 20px no-repeat;
}
.newtab { margin-left: 24px; }
.tabsearch {
  margin-left: auto;
  width: 56px; height: 56px;
  border-radius: 20px;
  display: grid; place-items: center;
  background: #6914e3;
}

.toolbar {
  display: flex;
  align-items: center;
  height: 94px;
  padding: 0 12px 0 32px;
  border-bottom: 2px solid #8540ea;
  border-radius: 16px 16px 0 0;
  background: #6914e3;
}
.nav { display: flex; align-items: center; gap: 48px; width: 208px; }
.omnibox {
  flex: 1;
  display: flex;
  align-items: center;
  height: 68px;
  padding: 0 32px 0 10px;
  border-radius: 34px;
  background: #5713b5;
}
.info { width: 48px; height: 48px; border-radius: 50%; display: grid; place-items: center; background: #6914e3; }
.url { margin-left: 16px; font-size: 28px; }
.url span { color: #c9b2e6; }
.omni-icons { display: flex; align-items: center; gap: 30px; margin-left: auto; }
.avatar { width: 40px; height: 40px; margin: 0 24px 0 32px; border-radius: 50%; background: #1e4c40; font-size: 20px; }
.update {
  display: flex;
  align-items: center;
  justify-content: space-between;
  width: 388px; height: 68px;
  padding: 0 29px 0 24px;
  border-radius: 34px;
  background: #480a99;
  font-size: 26px;
  white-space: nowrap;
}

/* Login page */
.page {
  position: relative;
  flex: 1;
  display: grid;
  place-items: center;
  background: linear-gradient(to top right, #43067b, #603491, #7868e6);
}
.page::before {
  content: "";
  position: absolute;
  inset: 0;
  background:
    repeating-linear-gradient(45deg, rgba(255, 255, 255, .1) 95px, transparent 295px),
    repeating-linear-gradient(135deg, transparent 165px, rgba(255, 255, 255, .1) 365px);
  mask-image: linear-gradient(135deg, #000 2647px, transparent 2648px);
}
.card {
  position: relative;
  width: 960px;
  padding: 64px;
  border-radius: 32px;
  background: #1e1d2e;
  box-shadow: 0 10px 28px rgba(0, 0, 0, .4);
}
h1 { font-size: 48px; line-height: 64px; font-weight: 700; letter-spacing: 4px; text-align: center; color: #fafafa; }
.subtitle { margin: 32px 0 64px; font-size: 30px; line-height: 48px; text-align: center; color: #9ca3af; }
.label { display: block; margin-bottom: 16px; font-size: 27px; line-height: 40px; font-weight: 500; color: #d1d5db; }
.field { position: relative; margin-bottom: 48px; }
.field input {
  display: block;
  width: 100%; height: 100px;
  padding: 0 80px;
  border: 2px solid #566073;
  border-radius: 16px;
  background: #e8f0fe;
  font: 31px Inter, "Liberation Sans", sans-serif;
  color: #000;
}
.field input[type="password"] { font-size: 26px; }
.lead { position: absolute; left: 24px; top: 30px; }
.toggle { position: absolute; right: 24px; top: 30px; }
.options { display: flex; justify-content: space-between; font-size: 27px; line-height: 40px; }
.remember { display: flex; align-items: center; gap: 16px; color: #9ca3af; }
.remember input {
  appearance: none;
  width: 32px; height: 32px;
  margin: 0;
  border: 2px solid #767676;
  border-radius: 5px;
  background: #fff;
}
.options a { font-size: 28px; font-weight: 500; color: #fff; }
.submit {
  display: block;
  width: 100%; height: 96px;
  margin: 48px 0;
  border-radius: 16px;
  background: linear-gradient(90deg, #43067b, #603491);
  font-size: 31px;
  font-weight: 500;
  color: #fff;
}
.signup { font-size: 31px; line-height: 48px; text-align: center; color: #9ca3af; }
.signup a { font-weight: 500; }

/* Dock */
.dock {
  display: flex;
  align-items: center;
  height: 106px;
  margin: 8px 71px 10px;
  padding: 0 3px;
  border: 2px solid #454a4a;
  border-radius: 40px;
  background: linear-gradient(90deg, #141d1f, #171a19 30%, #1a1b19 64%, #22421f 78%, #24471f 90%, #1a2c2b);
}
.slot { position: relative; flex: 1; height: 102px; padding-top: 14px; display: flex; justify-content: center; }
.icon { width: 68px; height: 68px; overflow: visible; }
.icon.preview { height: 72px; }
.slot.run::after {
  content: "";
  position: absolute;
  bottom: 2px; left: 50%;
  width: 8px; height: 8px;
  margin-left: -4px;
  border-radius: 50%;
  background: #9ba09f;
}
.badge {
  position: absolute;
  z-index: 1;
  top: 6px; right: 0;
  min-width: 32px; height: 32px;
  padding: 0 4px;
  border-radius: 16px;
  background: #e04a3c;
  color: #fff;
  font-size: 18px;
  line-height: 32px;
  text-align: center;
}
.divider { width: 38px; height: 78px; background: linear-gradient(#5a5f5c, #5a5f5c) center / 2px 100% no-repeat; }
.thumb { width: 78px; align-self: center; margin-top: -14px; }
.mini { position: absolute; right: 4px; top: 60px; width: 26px; height: 26px; }
.trash { width: 64px; }
.prime-text { font: 700 16px Inter, sans-serif; fill: #fff; }
.cl-text { font: 700 26px Inter, sans-serif; fill: #fff; }
.term-text { font: 700 17px "Liberation Mono", monospace; fill: #fff; }
```
